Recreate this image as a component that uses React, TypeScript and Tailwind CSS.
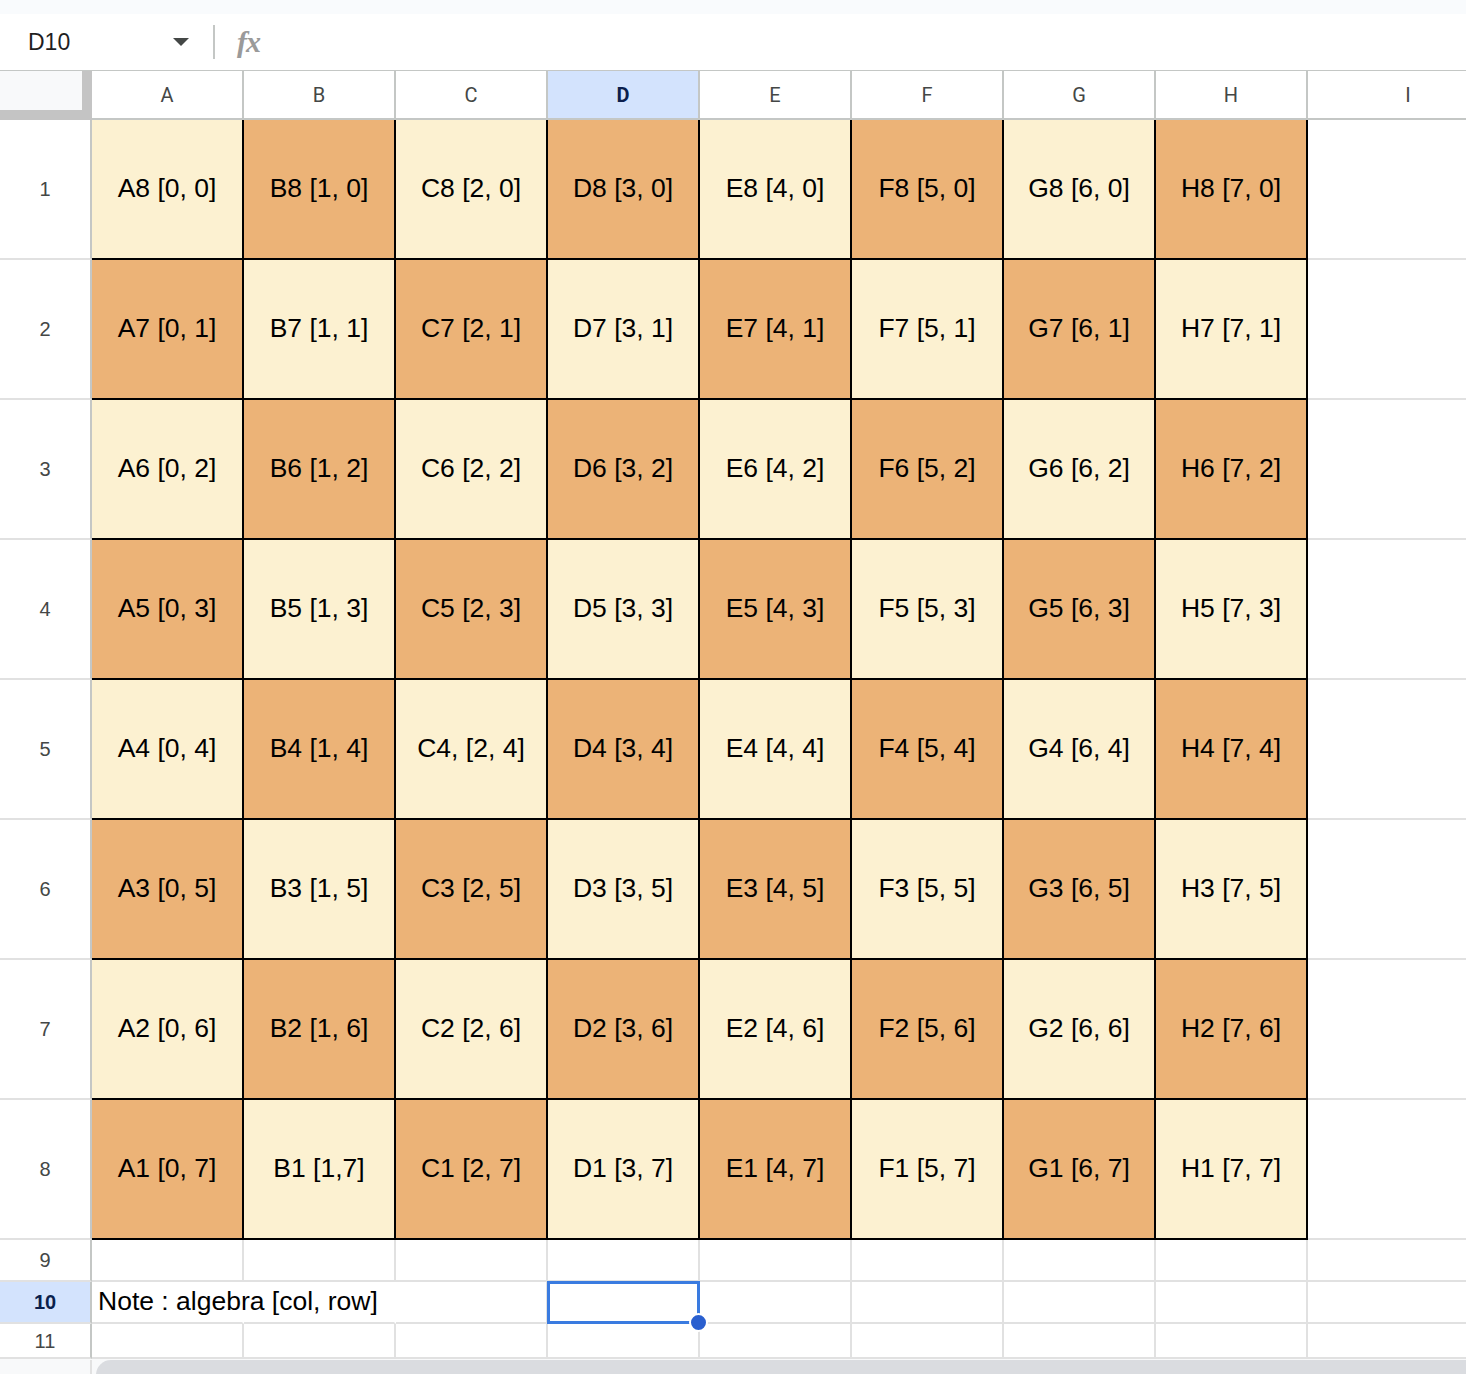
import React from "react"

const COLS = ["A", "B", "C", "D", "E", "F", "G", "H"]

const labelFor = (col: number, row: number) => {
  const name = `${COLS[col]}${8 - row}`
  if (name === "C4") return "C4, [2, 4]"
  if (name === "B1") return "B1 [1,7]"
  return `${name} [${col}, ${row}]`
}

function RowHeader({ label, active = false, h }: { label: string; active?: boolean; h: string }) {
  return (
    <div
      className={`${h} w-[92px] shrink-0 flex items-center justify-center border-r-2 border-b-2 border-r-[#c4c7c5] border-b-[#e1e1e1] text-[20px] ${
        active ? "bg-[#d3e3fd] text-[#0b1f4d] font-bold" : "bg-white text-[#444746]"
      }`}
    >
      {label}
    </div>
  )
}

export default function App() {
  return (
    <div className="w-[1466px] h-[1374px] overflow-hidden bg-white flex flex-col font-['Liberation_Sans',Arial,sans-serif]">
      {/* top strip */}
      <div className="h-[14px] bg-[#f9fbfd] shrink-0" />

      {/* formula bar */}
      <div className="h-[56px] shrink-0 flex items-center">
        <div className="w-[213px] pl-[28px] pr-[24px] flex items-center justify-between">
          <span className="text-[23px] text-[#1f1f1f]">D10</span>
          <svg width="16" height="9" viewBox="0 0 16 9">
            <path d="M0 0 L16 0 L8 8 Z" fill="#444746" />
          </svg>
        </div>
        <div className="w-[2px] h-[34px] bg-[#c4c7c5]" />
        <span className="ml-[22px] text-[30px] italic text-[#9a9a9a] font-['Liberation_Serif',serif] font-bold leading-none tracking-[-1px]">
          fx
        </span>
      </div>

      {/* column headers */}
      <div className="h-[50px] shrink-0 flex border-t-[1px] border-[#c4c7c5]">
        <div className="w-[92px] shrink-0 bg-[#c4c4c4]">
          <div className="w-[82px] h-[39px] bg-[#f8f9fa]" />
        </div>
        {COLS.map((c) => (
          <div
            key={c}
            className={`w-[152px] shrink-0 flex items-center justify-center border-r-2 border-b-2 border-[#c4c7c5] text-[20px] font-['Roboto',sans-serif] ${
              c === "D" ? "bg-[#d3e3fd] text-[#0b1f4d] font-bold" : "text-[#444746]"
            }`}
          >
            {c}
          </div>
        ))}
        <div className="w-[200px] shrink-0 flex items-center justify-center border-b-2 border-[#c4c7c5] text-[20px] text-[#444746] font-['Roboto',sans-serif]">
          I
        </div>
      </div>

      {/* board rows */}
      {Array.from({ length: 8 }).map((_, row) => (
        <div key={row} className="flex shrink-0">
          <RowHeader label={String(row + 1)} h="h-[140px]" />
          {COLS.map((_, col) => (
            <div
              key={col}
              className={`h-[140px] w-[152px] shrink-0 flex items-center justify-center border-r-2 border-b-2 border-black text-[26.5px] text-black ${
                (row + col) % 2 === 0 ? "bg-[#fcf1d1]" : "bg-[#ecb377]"
              }`}
            >
              {labelFor(col, row)}
            </div>
          ))}
          <div className="h-[140px] flex-1 border-b-2 border-[#e1e1e1]" />
        </div>
      ))}

      {/* row 9 */}
      <div className="flex shrink-0">
        <RowHeader label="9" h="h-[42px]" />
        {COLS.map((c) => (
          <div key={c} className="h-[42px] w-[152px] shrink-0 border-r-2 border-b-2 border-[#e1e1e1]" />
        ))}
        <div className="h-[42px] flex-1 border-b-2 border-[#e1e1e1]" />
      </div>

      {/* row 10 */}
      <div className="flex shrink-0">
        <RowHeader label="10" active h="h-[42px]" />
        <div className="relative h-[42px] w-[152px] shrink-0 border-b-2 border-[#e1e1e1] border-r-2 border-r-transparent">
          <span className="absolute left-[6px] top-0 h-full flex items-center whitespace-nowrap text-[26.5px] text-black">
            Note : algebra [col, row]
          </span>
        </div>
        <div className="h-[42px] w-[152px] shrink-0 border-b-2 border-[#e1e1e1] border-r-2 border-r-transparent" />
        <div className="h-[42px] w-[152px] shrink-0 border-r-2 border-b-2 border-[#e1e1e1]" />
        <div className="relative h-[42px] w-[152px] shrink-0 border-r-2 border-b-2 border-[#e1e1e1]">
          <div className="absolute -left-[1px] -top-[1px] w-[153px] h-[43px] border-[3px] border-[#3a7be0]" />
          <div className="absolute -right-[10px] -bottom-[10px] w-[19px] h-[19px] rounded-full bg-[#2a5fcf] border-2 border-white" />
        </div>
        {COLS.slice(4).map((c) => (
          <div key={c} className="h-[42px] w-[152px] shrink-0 border-r-2 border-b-2 border-[#e1e1e1]" />
        ))}
        <div className="h-[42px] flex-1 border-b-2 border-[#e1e1e1]" />
      </div>

      {/* row 11 */}
      <div className="flex shrink-0">
        <RowHeader label="11" h="h-[35px]" />
        {COLS.map((c) => (
          <div key={c} className="h-[35px] w-[152px] shrink-0 border-r-2 border-b-2 border-[#e1e1e1]" />
        ))}
        <div className="h-[35px] flex-1 border-b-2 border-[#e1e1e1]" />
      </div>

      {/* horizontal scrollbar */}
      <div className="flex-1 flex bg-[#f8f9fa] pt-[1px]">
        <div className="w-[92px] shrink-0 border-r-2 border-[#e1e1e1]" />
        <div className="ml-[4px] flex-1 h-[30px] rounded-l-full bg-[#dadce0]" />
      </div>
    </div>
  )
}
